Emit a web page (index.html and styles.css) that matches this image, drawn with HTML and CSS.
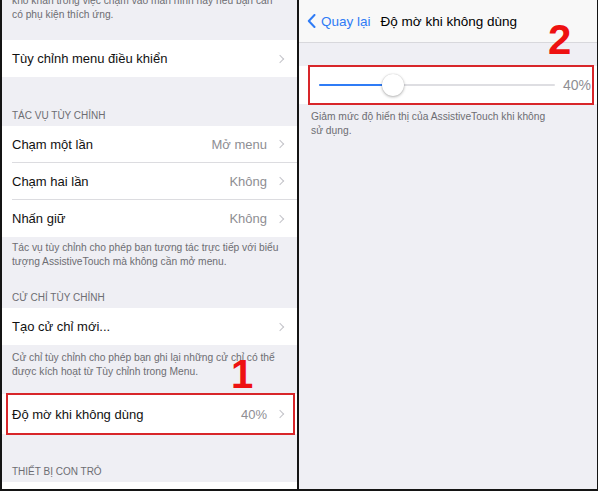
FILE: index.html
```html
<!DOCTYPE html>
<html lang="vi">
<head>
<meta charset="utf-8">
<link rel="stylesheet" href="styles.css">
</head>
<body>
<div class="frame">
  <section class="panel left">
    <p class="note note-top">khó khăn trong việc chạm vào màn hình hay nếu bạn cần<br>có phụ kiện thích ứng.</p>
    <div class="group">
      <div class="row"><span class="label">Tùy chỉnh menu điều khiển</span><span class="chev"></span></div>
    </div>
    <h3 class="header h1">TÁC VỤ TÙY CHỈNH</h3>
    <div class="group">
      <div class="row"><span class="label">Chạm một lần</span><span class="value">Mở menu</span><span class="chev"></span></div>
      <div class="row"><span class="label">Chạm hai lần</span><span class="value">Không</span><span class="chev"></span></div>
      <div class="row"><span class="label">Nhấn giữ</span><span class="value">Không</span><span class="chev"></span></div>
    </div>
    <p class="note n2">Tác vụ tùy chỉnh cho phép bạn tương tác trực tiếp với biểu<br>tượng AssistiveTouch mà không cần mở menu.</p>
    <h3 class="header h2">CỬ CHỈ TÙY CHỈNH</h3>
    <div class="group">
      <div class="row"><span class="label">Tạo cử chỉ mới...</span><span class="chev"></span></div>
    </div>
    <p class="note n3">Cử chỉ tùy chỉnh cho phép bạn ghi lại những cử chỉ có thể<br>được kích hoạt từ Tùy chỉnh trong Menu.</p>
    <div class="group">
      <div class="row tall"><span class="label">Độ mờ khi không dùng</span><span class="value">40%</span><span class="chev"></span></div>
    </div>
    <h3 class="header h3">THIẾT BỊ CON TRỎ</h3>
    <div class="group"><div class="row"></div></div>
    <div class="redbox box1"></div>
    <div class="num num1">1</div>
  </section>
  <div class="divider"></div>
  <section class="panel right">
    <nav class="navbar">
      <span class="back"><svg width="9" height="14" viewBox="0 0 9 14"><path d="M7.5 1 L1.8 7 L7.5 13" fill="none" stroke="#2f7cf6" stroke-width="2" stroke-linecap="round" stroke-linejoin="round"/></svg>Quay lại</span>
      <span class="title">Độ mờ khi không dùng</span>
    </nav>
    <div class="group g6">
      <div class="slider-row">
        <div class="track"><div class="fill" style="width:31.5%"></div><div class="thumb" style="left:31.5%"></div></div>
        <span class="pct">40%</span>
      </div>
    </div>
    <p class="note note-r">Giảm mức độ hiển thị của AssistiveTouch khi không<br>sử dụng.</p>
    <div class="redbox box2"></div>
    <div class="num num2">2</div>
  </section>
</div>
</body>
</html>
```
FILE: styles.css
```css
* { box-sizing: border-box; }
html, body { margin: 0; padding: 0; background: #fff; }
body {
  width: 600px;
  height: 491px;
  overflow: hidden;
  font-family: "Liberation Sans", Arial, sans-serif;
}
.frame {
  display: flex;
  width: 598px;
  height: 491px;
  border-left: 2px solid #141414;
  border-right: 1px solid #141414;
  border-bottom: 2px solid #141414;
}
.divider { width: 2px; background: #141414; flex: none; }
.panel {
  position: relative;
  background: #efeff4;
  height: 489px;
  overflow: hidden;
}
.left { width: 295px; flex: none; }
.right { width: 298px; flex: none; }

.note {
  margin: 0;
  padding: 4px 10px 0 10px;
  font-size: 10.25px;
  line-height: 14px;
  color: #6d6d72;
  white-space: nowrap;
  height: 44px;
}
.note-top { margin-top: -10px; height: 50px; }
.n3 { height: 49px; padding-top: 6px; }

.group { background: #fff; }
.row {
  display: flex;
  align-items: center;
  height: 37px;
  margin-left: 10px;
  padding-right: 12px;
  border-bottom: 1px solid #dcdce0;
  font-size: 13px;
  color: #111;
}
.group .row:last-child { border-bottom: none; }
.row.tall { height: 40px; }
.label { flex: 1; }
.value { color: #8e8e93; margin-right: 10px; }
.chev {
  width: 6px;
  height: 6px;
  border-top: 1.3px solid #c4c4c9;
  border-right: 1.3px solid #c4c4c9;
  transform: rotate(45deg);
  margin-right: 2px;
}

.header {
  margin: 0;
  padding: 0 10px 5px;
  font-size: 10px;
  font-weight: normal;
  color: #6d6d72;
  display: flex;
  align-items: flex-end;
  white-space: nowrap;
}
.h1 { height: 49px; }
.h2 { height: 27px; }
.h3 { height: 48px; }

.navbar {
  height: 43px;
  background: #f8f8f8;
  border-bottom: 1px solid #d8d8dc;
  display: flex;
  align-items: center;
  padding-left: 8px;
  font-size: 13.5px;
}
.back {
  display: flex;
  align-items: center;
  gap: 5px;
  color: #2f7cf6;
}
.title { margin-left: 10px; color: #000; }

.g6 { margin-top: 23px; }
.slider-row {
  height: 38px;
  display: flex;
  align-items: center;
  padding: 0 6px 0 20px;
}
.track {
  position: relative;
  width: 236px;
  height: 2px;
  background: #dedee2;
  border-radius: 1px;
}
.fill { height: 2px; background: #2f7cf6; border-radius: 1px; }
.thumb {
  position: absolute;
  top: -10px;
  width: 22px;
  height: 22px;
  margin-left: -11px;
  border-radius: 50%;
  background: #fff;
  box-shadow: 0 1px 3px rgba(0,0,0,0.3), 0 0 1px rgba(0,0,0,0.2);
}
.pct { margin-left: auto; color: #8e8e93; font-size: 14px; }
.note-r { padding: 6px 12px 0; }

.redbox {
  position: absolute;
  border: 2px solid #d8262a;
}
.box1 { left: 4px; top: 393px; width: 289px; height: 42px; }
.box2 { left: 9px; top: 65px; width: 286px; height: 40px; }
.num {
  position: absolute;
  color: #ee1111;
  font-weight: bold;
  line-height: 1;
}
.num1 { left: 229px; top: 354px; font-size: 40px; }
.num2 { left: 249px; top: 19px; font-size: 42px; }
```
